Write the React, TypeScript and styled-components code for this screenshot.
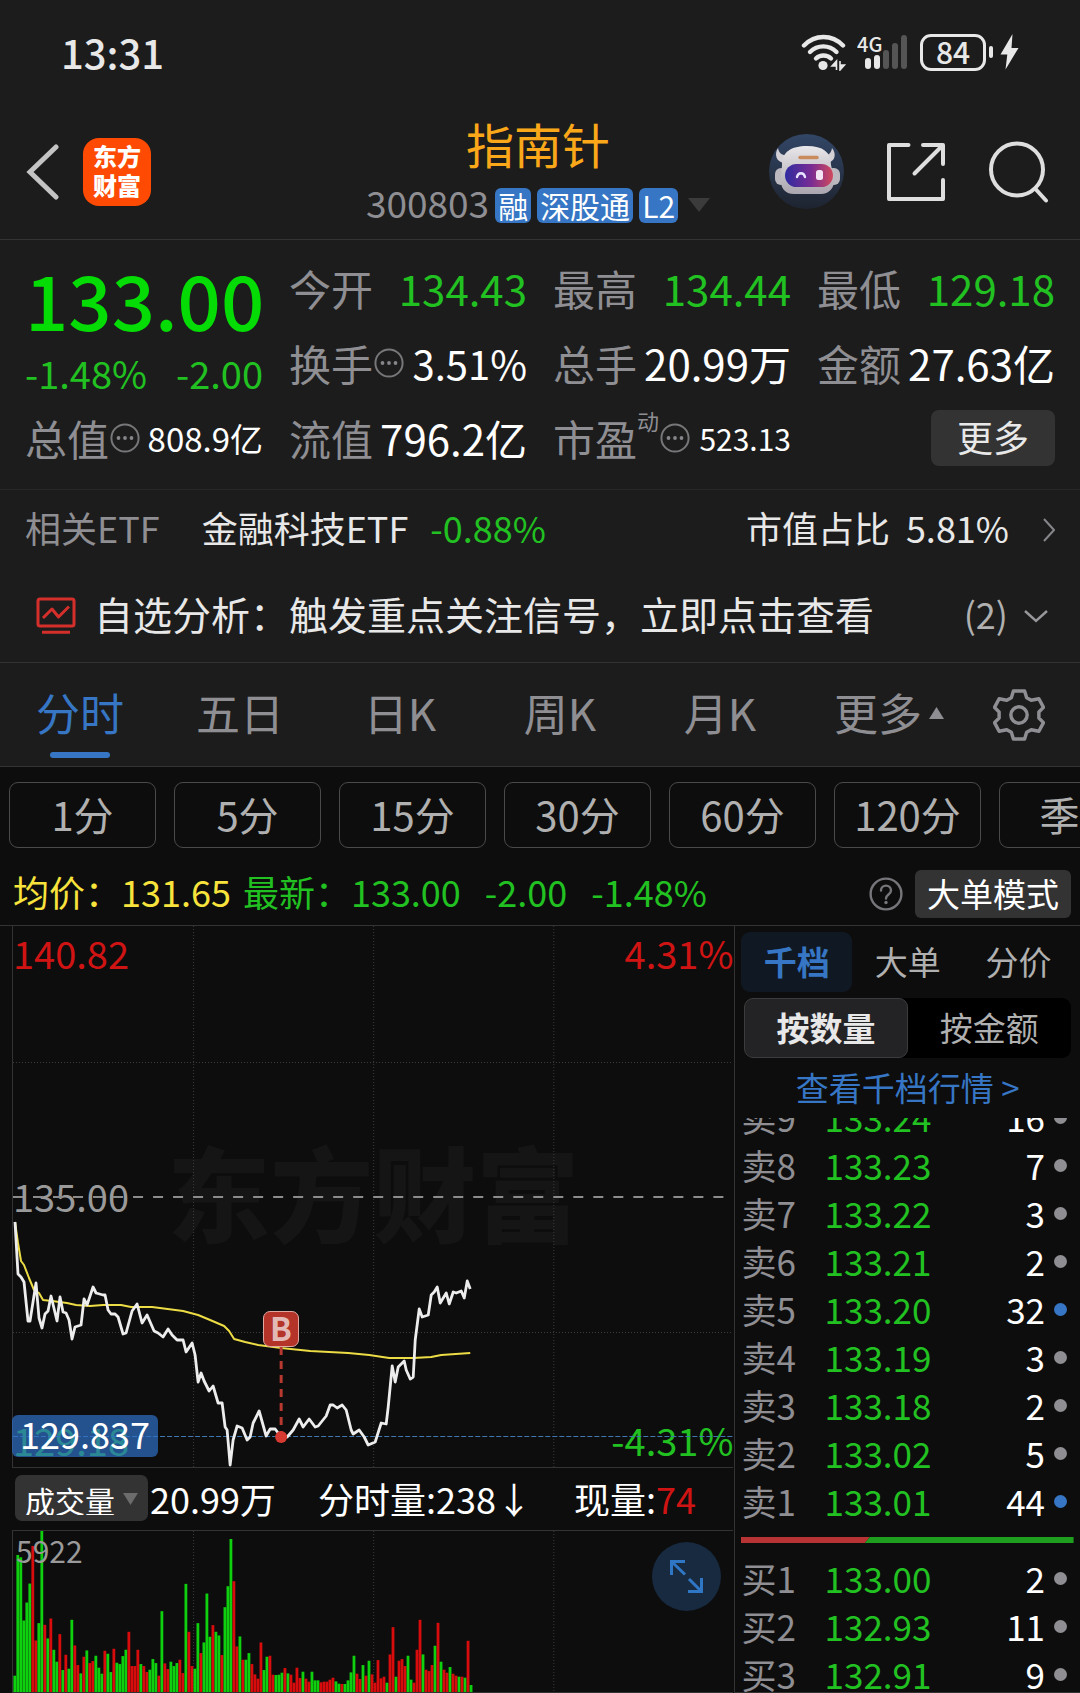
import React from "react";
import styled, { createGlobalStyle } from "styled-components";

const c = {
  panel: "#1c1c1c",
  page: "#0d0d0d",
  line: "#333333",
  label: "#8e8e93",
  soft: "#b0b0b0",
  text: "#e8e8e8",
  white: "#ffffff",
  green: "#22c122",
  brightGreen: "#05dc05",
  red: "#d01414",
  yellow: "#f8e33c",
  blue: "#3676c4",
};

const GlobalStyle = createGlobalStyle`
  * { box-sizing: border-box; }
  body {
    margin: 0;
    background: ${c.page};
    color: ${c.text};
    font-family: "Noto Sans CJK SC", "Noto Sans", sans-serif;
  }
  button, select {
    margin: 0;
    padding: 0;
    border: 0;
    background: none;
    color: inherit;
    font: inherit;
    cursor: pointer;
  }
  a { color: inherit; text-decoration: none; }
  svg { display: block; flex: none; }
`;

const Page = styled.main`
  width: 100%;
  overflow: hidden;
`;

/* ---------- top ---------- */

const Top = styled.header`
  background: ${c.panel};
  border-bottom: 1px solid ${c.line};
`;

const StatusBar = styled.div`
  display: flex;
  align-items: center;
  justify-content: space-between;
  height: 104px;
  padding: 0 61px;
`;

const Clock = styled.time`
  font-size: 40px;
  line-height: 60px;
  font-weight: 500;
`;

const StatusIcons = styled.div`
  display: flex;
  align-items: center;
  gap: 11px;
`;

const BatteryWrap = styled.div`
  display: flex;
  align-items: center;
  gap: 3px;
  margin-right: -4px;
`;

const Battery = styled.span`
  width: 66px;
  height: 37px;
  border: 3px solid ${c.text};
  border-radius: 11px;
  font-size: 30px;
  line-height: 28px;
  font-weight: 500;
  text-align: center;
`;

const BatteryNub = styled.span`
  width: 4px;
  height: 12px;
  border-radius: 2px;
  background: ${c.text};
`;

const TitleBar = styled.div`
  display: grid;
  grid-template-columns: 1fr auto 1fr;
  align-items: center;
  height: 135px;
  padding: 0 30px 0 26px;
`;

const TitleSide = styled.div<{ $end?: boolean }>`
  display: flex;
  align-items: center;
  gap: ${(p) => (p.$end ? "42px" : "24px")};
  justify-content: ${(p) => (p.$end ? "flex-end" : "flex-start")};
`;

const AppLogo = styled.a`
  display: grid;
  place-content: center;
  width: 68px;
  height: 68px;
  border-radius: 16px;
  background: #fe4a02;
  color: ${c.white};
  font-size: 24px;
  line-height: 29px;
  font-weight: 900;
  text-align: center;
  padding-bottom: 4px;
`;

const TitleBlock = styled.div`
  align-self: start;
  padding-top: 9px;
`;

const StockName = styled.h1`
  margin: 0 0 14px;
  color: #faa819;
  font-size: 48px;
  line-height: 60px;
  font-weight: 400;
  text-align: center;
`;

const CodeLine = styled.div`
  display: flex;
  align-items: baseline;
  gap: 6px;
  height: 36px;
`;

const Code = styled.span`
  color: ${c.label};
  font-size: 37px;
  line-height: 30px;
`;

const Badge = styled.span`
  padding: 0 3px;
  border-radius: 6px;
  background: ${c.blue};
  color: ${c.white};
  font-size: 30px;
  line-height: 35px;
`;

const CodeCaret = styled.svg`
  align-self: center;
  margin-left: 4px;
`;

/* ---------- quote ---------- */

const Quote = styled.section`
  display: grid;
  grid-template-columns: repeat(4, minmax(0, 1fr));
  grid-auto-rows: 75px;
  column-gap: 26px;
  padding: 10px 25px 14px;
  background: ${c.panel};
  border-bottom: 1px solid #282828;
`;

const LastPrice = styled.div`
  grid-row: span 2;
  color: ${c.green};
  font-size: 38px;
  line-height: 54px;
`;

const BigPrice = styled.strong`
  display: block;
  color: ${c.brightGreen};
  font-size: 76px;
  line-height: 96px;
  font-weight: 500;
  text-align: center;
`;

const ChangeLine = styled.div`
  display: flex;
  justify-content: space-between;
`;

const Cell = styled.div`
  display: flex;
  align-items: center;
  justify-content: space-between;
  font-size: 42px;
  line-height: 60px;
  white-space: nowrap;
`;

const CellLabel = styled.span`
  display: flex;
  align-items: center;
  color: ${c.label};
`;

const Sup = styled.sup`
  align-self: flex-start;
  font-size: 22px;
  line-height: 24px;
`;

const CellValue = styled.span<{ $size: number; $color: string }>`
  color: ${(p) => p.$color};
  font-size: ${(p) => p.$size}px;
`;

const MoreButton = styled.button`
  width: 124px;
  height: 56px;
  margin-left: auto;
  padding-bottom: 4px;
  border-radius: 8px;
  background: #333333;
  color: ${c.text};
  font-size: 36px;
  line-height: 50px;
`;

/* ---------- related ---------- */

const Related = styled.section`
  background: ${c.panel};
  border-bottom: 1px solid ${c.line};

  svg { margin-top: 6px; }
`;

const EtfRow = styled.a`
  display: flex;
  align-items: center;
  height: 73px;
  padding: 0 25px;
  font-size: 36px;
  line-height: 60px;
`;

const Muted = styled.span`
  color: ${c.label};
`;

const EtfName = styled.span`
  margin: 0 22px 0 42px;
`;

const Green = styled.span`
  color: ${c.green};
`;

const EtfShare = styled.span`
  display: flex;
  gap: 16px;
  margin-left: auto;
  margin-right: 34px;
`;

const SignalRow = styled.button`
  display: flex;
  align-items: center;
  width: 100%;
  height: 99px;
  padding: 0 32px 0 36px;
  text-align: left;
`;

const SignalText = styled.span`
  flex: 1;
  margin-left: 18px;
  font-size: 39px;
  line-height: 60px;
`;

const SignalCount = styled.span`
  margin-right: 16px;
  color: ${c.soft};
  font-size: 36px;
`;

/* ---------- period tabs ---------- */

const Tabs = styled.nav`
  display: grid;
  grid-template-columns: repeat(5, 80fr) 89fr 41fr;
  height: 104px;
  padding-right: 20px;
  background: ${c.panel};
  border-bottom: 1px solid ${c.line};
`;

const Tab = styled.button<{ $active?: boolean }>`
  display: flex;
  flex-direction: column;
  align-items: center;
  gap: 10px;
  padding-top: 20px;
  color: ${(p) => (p.$active ? c.blue : c.label)};
  font-size: 44px;
  line-height: 59px;

  &::after {
    content: "";
    width: 60px;
    height: 6px;
    border-radius: 3px;
    background: ${(p) => (p.$active ? c.blue : "transparent")};
  }
`;

const TabText = styled.span`
  display: flex;
  align-items: center;
  gap: 7px;
`;

const GearButton = styled.button`
  display: grid;
  place-content: center;
`;

const Chips = styled.div`
  display: flex;
  gap: 18px;
  padding: 15px 9px 9px;
  overflow: hidden;
`;

const Chip = styled.button`
  flex: none;
  width: 147px;
  height: 66px;
  padding-bottom: 2px;
  border: 1px solid #4a4a4a;
  border-radius: 9px;
  color: ${c.soft};
  font-size: 40px;
  line-height: 60px;
`;

const Info = styled.div`
  display: flex;
  align-items: center;
  height: 69px;
  padding: 0 9px 0 13px;
  border-bottom: 1px solid ${c.line};
  color: ${c.green};
  font-size: 36px;
  line-height: 60px;
  white-space: nowrap;

  button { margin-top: 6px; }
`;

const Average = styled.span`
  margin-right: 12px;
  color: ${c.yellow};
`;

const InfoDelta = styled.span`
  margin-left: 24px;
`;

const HelpButton = styled.button`
  margin: 0 12px 0 auto;
`;

const ModeButton = styled.button`
  height: 48px;
  padding: 0 12px 2px;
  border-radius: 6px;
  background: #333333;
  color: ${c.white};
  font-size: 33px;
  line-height: 44px;
`;

/* ---------- charts ---------- */

const Board = styled.div`
  display: grid;
  grid-template-columns: minmax(0, 17fr) minmax(0, 8fr);
`;

const Charts = styled.section`
  padding: 0 1px 0 12px;
`;

const PriceChart = styled.div`
  position: relative;
  height: 542px;
  border-left: 1px solid ${c.line};
  border-bottom: 1px solid ${c.line};
`;

const Plot = styled.svg`
  position: absolute;
  inset: 0;
  width: 100%;
  height: 100%;
`;

const Watermark = styled.div`
  position: absolute;
  inset: 209px 0 auto 0;
  color: #151515;
  font-size: 103px;
  line-height: 112px;
  font-weight: 900;
  text-align: center;
`;

const AxisLabel = styled.span<{ $top: number; $right?: boolean; $color: string }>`
  position: absolute;
  top: ${(p) => p.$top}px;
  ${(p) => (p.$right ? "right: 0;" : "left: 0;")}
  color: ${(p) => p.$color};
  font-size: 38px;
  line-height: 50px;
`;

const CursorTag = styled.span`
  position: absolute;
  left: -1px;
  top: 489px;
  padding: 0 8px 6px;
  border-radius: 6px;
  background: rgba(47, 113, 198, 0.7);
  color: ${c.white};
  font-size: 36px;
  line-height: 36px;
`;

const BuyMark = styled.span`
  position: absolute;
  left: 37.2%;
  top: 385px;
  width: 36px;
  height: 36px;
  margin-left: -18px;
  border: 1px solid #e0a8a2;
  border-radius: 7px;
  background: #b5342a;
  color: #e3b9b5;
  font-size: 32px;
  line-height: 30px;
  font-weight: 700;
  text-align: center;
`;

const VolumeBar = styled.div`
  display: flex;
  align-items: center;
  height: 62px;
  padding: 0 0 2px 3px;
  color: ${c.white};
  font-size: 36px;
  line-height: 50px;
  white-space: nowrap;
`;

const Picker = styled.label`
  position: relative;
  margin-right: 2px;

  svg {
    position: absolute;
    right: 10px;
    top: 18px;
    pointer-events: none;
  }
`;

const PickerSelect = styled.select`
  display: block;
  width: 133px;
  height: 46px;
  padding: 0 0 6px 10px;
  border-radius: 7px;
  background: #333333;
  appearance: none;
  font-size: 30px;
`;

const MinuteVolume = styled.span`
  margin: 0 42px;
`;

const Red = styled.span`
  color: ${c.red};
`;

const VolumeChart = styled.div`
  position: relative;
  height: 163px;
  border: 1px solid ${c.line};
  border-right: 0;
`;

const VolumeMax = styled.span`
  position: absolute;
  left: 3px;
  top: 2px;
  color: #9a9a9a;
  font-size: 30px;
  line-height: 34px;
`;

const ExpandButton = styled.button`
  position: absolute;
  right: 12px;
  top: 11px;
  display: grid;
  place-content: center;
  width: 69px;
  height: 69px;
  border-radius: 50%;
  background: #172a40;
`;

/* ---------- order book ---------- */

const Side = styled.aside`
  padding: 6px 6px 0;
  border-left: 1px solid ${c.line};
  border-bottom: 1px solid ${c.line};
`;

const SideTabs = styled.div`
  display: grid;
  grid-template-columns: repeat(3, 1fr);
  margin-bottom: 6px;
`;

const SideTab = styled.button<{ $active?: boolean }>`
  height: 60px;
  padding-bottom: 2px;
  border-radius: 9px;
  background: ${(p) => (p.$active ? "#101923" : "transparent")};
  color: ${(p) => (p.$active ? c.blue : c.soft)};
  font-size: 33px;
  font-weight: ${(p) => (p.$active ? 700 : 400)};
`;

const Segment = styled.div`
  display: grid;
  grid-template-columns: 1fr 1fr;
  margin: 0 3px;
  border-radius: 9px;
  background: #000000;
`;

const SegmentButton = styled.button<{ $active?: boolean }>`
  height: 60px;
  padding-bottom: 2px;
  border: 1px solid ${(p) => (p.$active ? "#3c3c3e" : "transparent")};
  border-radius: 9px;
  background: ${(p) => (p.$active ? "#232326" : "transparent")};
  color: ${(p) => (p.$active ? c.text : c.soft)};
  font-size: 33px;
  font-weight: ${(p) => (p.$active ? 700 : 400)};
`;

const DepthLink = styled.a`
  display: block;
  padding-bottom: 2px;
  color: ${c.blue};
  font-size: 33px;
  line-height: 58px;
  text-align: center;
`;

const BookView = styled.div<{ $height: number; $end?: boolean }>`
  display: flex;
  flex-direction: column;
  justify-content: ${(p) => (p.$end ? "flex-end" : "flex-start")};
  height: ${(p) => p.$height}px;
  overflow: hidden;
`;

const BookTable = styled.table`
  flex: none;
  width: 100%;
  border-collapse: collapse;
  font-size: 35px;
  line-height: 48px;
`;

const BookLevel = styled.th`
  width: 25%;
  padding: 0;
  color: ${c.label};
  font-weight: 400;
  text-align: left;
`;

const BookPrice = styled.td`
  padding: 0;
  color: ${c.green};
`;

const BookQty = styled.td`
  padding: 0;
  color: ${c.white};
  text-align: right;
`;

const BookMark = styled.td`
  width: 29px;
  padding: 0 7px 0 9px;
`;

const Dot = styled.span<{ $big: boolean }>`
  display: block;
  width: 13px;
  height: 13px;
  border-radius: 50%;
  background: ${(p) => (p.$big ? c.blue : c.label)};
`;

const Ratio = styled.svg`
  width: 100%;
  height: 6px;
  margin: 12px 0 11px;
`;

/* ---------- data ---------- */

type Level = [string, string, number];

const sells: Level[] = [
  ["卖9", "133.24", 16],
  ["卖8", "133.23", 7],
  ["卖7", "133.22", 3],
  ["卖6", "133.21", 2],
  ["卖5", "133.20", 32],
  ["卖4", "133.19", 3],
  ["卖3", "133.18", 2],
  ["卖2", "133.02", 5],
  ["卖1", "133.01", 44],
];

const buys: Level[] = [
  ["买1", "133.00", 2],
  ["买2", "132.93", 11],
  ["买3", "132.91", 9],
];

const priceLine =
  "2,296 5,348 8,351 11,356 15,395 17,395 23,357 26,392 29,402 32,388 35,385 38,370 44,395 47,371 50,386 53,387 56,394 59,413 62,401 68,399 71,373 74,379 80,361 83,367 90,369 92,369 95,384 98,388 102,388 105,391 110,408 113,407 119,385 124,378 129,397 134,389 141,405 145,407 150,411 155,403 159,409 164,414 170,414 173,426 179,417 182,429 185,456 188,447 191,455 196,465 200,460 205,477 209,477 212,501 214,504 217,539 220,514 224,500 229,502 234,514 237,511 240,497 246,485 253,510 257,503 262,503 268,511 274,511 280,504 286,493 290,501 296,493 302,501 305,500 313,490 317,479 320,479 324,482 329,479 333,484 338,504 340,508 346,504 351,511 355,519 362,516 368,497 373,498 375,481 379,440 382,456 385,441 391,435 393,444 397,453 400,451 402,414 406,383 409,391 415,389 418,369 421,366 424,361 427,377 433,367 436,378 440,366 443,367 448,365 451,372 454,355 457,363";

const averageLine =
  "2,296 5,317 8,335 11,339 16,352 21,364 26,367 30,374 39,375 54,377 63,379 77,380 90,379 108,379 118,381 139,381 170,385 185,389 197,394 211,400 216,405 221,413 232,416 245,419 268,422 297,425 335,427 356,429 376,432 400,432 418,431 428,429 457,427";

// One value a minute; a negative value is a minute drawn in red.
const volumes = [
  49, 412, 405, 215, 269, 326, -439, -155, 207, 484, -202, 161, -221, 127, 91, -174, 66, -112, 70, 217,
  -140, -81, 56, -106, 125, -87, -93, 109, 73, 55, -124, 115, 60, -130, 88, 84, 108, 127, -181, -78,
  -78, -127, 84, -78, -60, 67, 99, 87, -49, 243, -86, -69, 91, 78, 87, -97, -57, 325, -181, -78,
  70, 207, -117, 149, 296, 166, -201, 181, 170, -111, 255, 318, 460, -333, -137, 167, -97, 97, 117, -84,
  -53, -40, -149, 66, 106, -109, -52, 51, 52, 58, -72, 56, -52, -28, -73, -42, 61, -40, -31, 61,
  35, 35, -29, -31, -31, -37, -43, 32, 25, -24, 24, 35, 59, 109, -55, -39, 81, -49, 94, -53,
  -28, -96, -41, -46, 28, -113, -195, 46, -94, -99, -78, 109, 37, -28, -127, -217, 113, -67, -63, -81,
  139, -208, 91, -67, -58, 75, -55, -49, 46, -46, 43, -154, 21,
];

/* ---------- icons ---------- */

const MoreDots = () => (
  <svg width="32" height="32" viewBox="0 0 32 32" fill="none">
    <circle cx="16" cy="16" r="13.6" stroke="#77777a" strokeWidth="2" />
    <circle cx="9.5" cy="16" r="1.9" fill="#85858a" />
    <circle cx="16" cy="16" r="1.9" fill="#85858a" />
    <circle cx="22.5" cy="16" r="1.9" fill="#85858a" />
  </svg>
);

const Wifi = () => (
  <svg width="45" height="37" viewBox="0 0 45 37" fill="none" stroke={c.text} strokeWidth="4.4" strokeLinecap="round">
    <path d="M3 11.5C14 .2 31 .2 42 11.5" />
    <path d="M9 18C16.5 10.5 28 10.5 35.5 18" />
    <path d="M15 24.5C19 20.5 26 20.5 30 24.5" />
    <circle cx="22" cy="31.500" r="4.600" fill={c.text} stroke="none" />
    <path d="M35.500 27v9M35.500 27l-4.500 5h4.500zM39 36v-9M39 36l4.500-5H39z" fill={c.text} strokeWidth="1.600" strokeLinecap="butt" />
  </svg>
);

const Signal = () => (
  <svg width="52" height="37" viewBox="0 0 52 37">
    <text x="0" y="18" fill={c.text} fontSize="20" fontWeight="500">4G</text>
    <rect x="8" y="24" width="6" height="11" rx="3" fill={c.text} />
    <rect x="17" y="21" width="6" height="14" rx="3" fill={c.text} />
    <rect x="26" y="16" width="6" height="19" rx="3" fill="#555" />
    <rect x="35" y="9" width="6" height="26" rx="3" fill="#555" />
    <rect x="44" y="1" width="6" height="34" rx="3" fill="#555" />
  </svg>
);

const Bolt = () => (
  <svg width="19" height="36" viewBox="0 0 19 36" fill={c.text}>
    <path d="M12.5 0L.5 20.5h6.800L5.500 35.500 18.500 14h-7z" />
  </svg>
);

const Robot = () => (
  <svg width="75" height="75" viewBox="0 0 75 75">
    <defs>
      <linearGradient id="disc" x1="0" y1="0" x2="0" y2="1">
        <stop offset="0" stopColor="#324666" />
        <stop offset="1" stopColor="#1e2430" />
      </linearGradient>
      <linearGradient id="shell" x1="0" y1="0" x2="0" y2="1">
        <stop offset="0" stopColor="#e9e7ea" />
        <stop offset="1" stopColor="#aaa5ae" />
      </linearGradient>
      <linearGradient id="visor" x1="0" y1="0" x2="1" y2="0">
        <stop offset="0" stopColor="#2f2ba0" />
        <stop offset="0.55" stopColor="#7a2c94" />
        <stop offset="1" stopColor="#d04a5c" />
      </linearGradient>
    </defs>
    <circle cx="37.5" cy="37.5" r="37.5" fill="url(#disc)" />
    <path d="M9 14c-4 6-2 14 6 15l5-8c-6 1-10-1-11-7zM63 14c5 6 3 14-5 15l-5-8c6 1 9-1 10-7z" fill="#d3d0d6" />
    <rect x="6" y="34" width="12" height="17" rx="6" fill="#bcb8c0" />
    <rect x="58" y="34" width="13" height="17" rx="6" fill="#bcb8c0" />
    <path d="M13 31C13 18 22 12 38 12s24 6 24 19l3 13c1 10-5 16-13 16H25c-9 0-14-6-13-16z" fill="url(#shell)" />
    <path d="M31 23.500h17" stroke="#c98a5c" strokeWidth="3.500" strokeLinecap="round" fill="none" />
    <rect x="16" y="30" width="48" height="23" rx="11.500" fill="url(#visor)" />
    <path d="M28 43c1-5 7-5 8 0" stroke="#e7e4ff" strokeWidth="2.400" strokeLinecap="round" fill="none" />
    <rect x="47" y="36" width="7" height="10" rx="2.500" fill="#f2e4f2" />
  </svg>
);

const Share = () => (
  <svg width="60" height="60" viewBox="0 0 60 60" fill="none" stroke="#dedede" strokeWidth="4" strokeLinecap="round" strokeLinejoin="round">
    <path d="M22.5 3H3v54h54V38M37 3h20v19M56 4L28.500 31.500" />
  </svg>
);

const Search = () => (
  <svg width="62" height="62" viewBox="0 0 62 62" fill="none" stroke="#dedede" strokeWidth="4" strokeLinecap="round">
    <circle cx="29" cy="28.5" r="26" />
    <path d="M48 48.5L58 59.5" />
  </svg>
);

const Gear = () => (
  <svg width="52" height="52" viewBox="0 0 51 51" fill="none" stroke={c.label} strokeWidth="3.4" strokeLinejoin="round">
    <path d="M20 2h11l2 6.5 4.5 2.5 7.5-1.5 4.5 8.5L45 22.500v6l4.500 4.500-4.500 8.500-7.500-1.500-4.500 2.500-2 6.500H20l-2-6.500-4.500-2.500L6 41.500 1.500 33 6 28.500v-6L1.500 18 6 9.500l7.500 1.500L18 8.500z" />
    <circle cx="25.5" cy="25.5" r="8" />
  </svg>
);

const Help = () => (
  <svg width="34" height="34" viewBox="0 0 34 34" fill="none" stroke="#76767a" strokeWidth="2.4">
    <circle cx="17" cy="17" r="15.4" />
    <path d="M12 13.5c0-6.500 10-6.500 10 0 0 4-5 4-5 8" strokeLinecap="round" />
    <circle cx="17" cy="25.5" r="1.7" fill="#76767a" stroke="none" />
  </svg>
);

const Monitor = () => (
  <svg width="40" height="37" viewBox="0 0 40 37" fill="none" stroke="#d42f2b" strokeWidth="3">
    <rect x="2" y="2" width="36" height="27" rx="2" />
    <path d="M7 21l9-9 6.500 8L33 9.500M6 35.200h28" strokeLinejoin="round" />
  </svg>
);

/* ---------- sections ---------- */

const CellItem = ({ label, value, sup, dots, size = 42, color = c.white }: {
  label: string; value: string; sup?: string; dots?: boolean; size?: number; color?: string;
}) => (
  <Cell>
    <CellLabel>
      {label}
      {sup && <Sup>{sup}</Sup>}
      {dots && <MoreDots />}
    </CellLabel>
    <CellValue $size={size} $color={color}>{value}</CellValue>
  </Cell>
);

const Book = ({ rows, label }: { rows: Level[]; label: string }) => (
  <BookTable aria-label={label}>
    <tbody>
      {rows.map(([name, price, qty]) => (
        <tr key={name}>
          <BookLevel scope="row">{name}</BookLevel>
          <BookPrice>{price}</BookPrice>
          <BookQty>{qty}</BookQty>
          <BookMark><Dot $big={qty > 30} /></BookMark>
        </tr>
      ))}
    </tbody>
  </BookTable>
);

const Grid = ({ height, rows = [] }: { height: number; rows?: number[] }) => (
  <g stroke="#3c3c3c" strokeWidth="1" strokeDasharray="1 2">
    {[180, 360, 540].map((x) => (
      <line key={x} x1={x + 0.5} x2={x + 0.5} y1="0" y2={height} vectorEffect="non-scaling-stroke" />
    ))}
    {rows.map((y) => (
      <line key={y} x1="0" x2="720" y1={y + 0.5} y2={y + 0.5} vectorEffect="non-scaling-stroke" />
    ))}
  </g>
);

export default function App() {
  return (
    <Page>
      <GlobalStyle />
      <Top>
        <StatusBar>
          <Clock>13:31</Clock>
          <StatusIcons>
            <Wifi />
            <Signal />
            <BatteryWrap>
              <Battery>84</Battery>
              <BatteryNub />
            </BatteryWrap>
            <Bolt />
          </StatusIcons>
        </StatusBar>
        <TitleBar>
          <TitleSide>
            <button aria-label="返回">
              <svg width="33" height="58" viewBox="0 0 33 58" fill="none" stroke="#c4c4c4" strokeWidth="5" strokeLinecap="round">
                <path d="M30 4L4 29l26 25" />
              </svg>
            </button>
            <AppLogo href="#home">东方<br />财富</AppLogo>
          </TitleSide>
          <TitleBlock>
            <StockName>指南针</StockName>
            <CodeLine>
              <Code>300803</Code>
              <Badge>融</Badge>
              <Badge>深股通</Badge>
              <Badge>L2</Badge>
              <CodeCaret width="22" height="14" viewBox="0 0 22 14" fill="#3b3b3b">
                <path d="M0 0h22L11 14z" />
              </CodeCaret>
            </CodeLine>
          </TitleBlock>
          <TitleSide $end>
            <button aria-label="助手"><Robot /></button>
            <button aria-label="分享"><Share /></button>
            <button aria-label="搜索"><Search /></button>
          </TitleSide>
        </TitleBar>
      </Top>

      <Quote>
        <LastPrice>
          <BigPrice>133.00</BigPrice>
          <ChangeLine><span>-1.48%</span><span>-2.00</span></ChangeLine>
        </LastPrice>
        <CellItem label="今开" value="134.43" color={c.green} />
        <CellItem label="最高" value="134.44" color={c.green} />
        <CellItem label="最低" value="129.18" color={c.green} />
        <CellItem label="换手" value="3.51%" dots size={40} />
        <CellItem label="总手" value="20.99万" />
        <CellItem label="金额" value="27.63亿" />
        <CellItem label="总值" value="808.9亿" dots size={33} />
        <CellItem label="流值" value="796.2亿" />
        <CellItem label="市盈" value="523.13" sup="动" dots size={30} />
        <Cell><MoreButton>更多</MoreButton></Cell>
      </Quote>

      <Related>
        <EtfRow href="#etf">
          <Muted>相关ETF</Muted>
          <EtfName>金融科技ETF</EtfName>
          <Green>-0.88%</Green>
          <EtfShare><span>市值占比</span><span>5.81%</span></EtfShare>
          <svg width="12" height="24" viewBox="0 0 12 24" fill="none" stroke="#85858a" strokeWidth="2">
            <path d="M1 1l10 11L1 23" />
          </svg>
        </EtfRow>
        <SignalRow>
          <Monitor />
          <SignalText>自选分析：触发重点关注信号，立即点击查看</SignalText>
          <SignalCount>(2)</SignalCount>
          <svg width="24" height="14" viewBox="0 0 24 14" fill="none" stroke="#98989c" strokeWidth="2.4">
            <path d="M1 2l11 10L23 2" />
          </svg>
        </SignalRow>
      </Related>

      <Tabs>
        <Tab $active>分时</Tab>
        <Tab>五日</Tab>
        <Tab>日K</Tab>
        <Tab>周K</Tab>
        <Tab>月K</Tab>
        <Tab>
          <TabText>
            更多
            <svg width="15" height="12" viewBox="0 0 15 12" fill={c.label}><path d="M7.5 0L15 12H0z" /></svg>
          </TabText>
        </Tab>
        <GearButton aria-label="设置"><Gear /></GearButton>
      </Tabs>

      <Chips>
        {["1分", "5分", "15分", "30分", "60分", "120分", "季K"].map((t) => (
          <Chip key={t}>{t}</Chip>
        ))}
      </Chips>

      <Info>
        <Average>均价：131.65</Average>
        <span>最新：133.00</span>
        <InfoDelta>-2.00</InfoDelta>
        <InfoDelta>-1.48%</InfoDelta>
        <HelpButton aria-label="帮助"><Help /></HelpButton>
        <ModeButton>大单模式</ModeButton>
      </Info>

      <Board>
        <Charts>
          <PriceChart>
            <Watermark>东方财富</Watermark>
            <AxisLabel $top={2} $color={c.red}>140.82</AxisLabel>
            <AxisLabel $top={2} $right $color={c.red}>4.31%</AxisLabel>
            <AxisLabel $top={245} $color="#9a9a9a">135.00</AxisLabel>
            <AxisLabel $top={489} $color={c.green}>129.18</AxisLabel>
            <AxisLabel $top={489} $right $color={c.green}>-4.31%</AxisLabel>
            <Plot viewBox="0 0 720 541" preserveAspectRatio="none" fill="none">
              <Grid height={541} rows={[136, 406]} />
              <line x1="0" x2="720" y1="271" y2="271" stroke="#8c8c8c" strokeWidth="2" strokeDasharray="10 10" />
              <line x1="0" x2="720" y1="510.5" y2="510.5" stroke="#3f77b0" strokeWidth="1" strokeDasharray="5 2" />
              <polyline points={averageLine} stroke="#ecdc45" strokeWidth="2" strokeLinejoin="round" />
              <polyline points={priceLine} stroke="#ededed" strokeWidth="2.8" strokeLinejoin="round" />
              <line x1="268" x2="268" y1="421" y2="506" stroke="#b8392f" strokeWidth="3" strokeDasharray="8 6" />
              <circle cx="268" cy="511" r="6" fill="#d63a30" />
            </Plot>
            <BuyMark>B</BuyMark>
            <CursorTag>129.837</CursorTag>
          </PriceChart>
          <VolumeBar>
            <Picker>
              <PickerSelect aria-label="指标">
                <option>成交量</option>
              </PickerSelect>
              <svg width="15" height="12" viewBox="0 0 15 12" fill="#6c6c6c"><path d="M0 0h15L7.5 12z" /></svg>
            </Picker>
            <span>20.99万</span>
            <MinuteVolume>分时量:238↓</MinuteVolume>
            <span>现量:<Red>74</Red></span>
          </VolumeBar>
          <VolumeChart>
            <Plot viewBox="0 0 720 484" preserveAspectRatio="none">
              <Grid height={484} />
              {volumes.map((v, i) => (
                <rect key={i} x={i * 3 + 0.4} y={484 - Math.abs(v)} width="2.8" height={Math.abs(v)} fill={v > 0 ? "#0fd00f" : "#d80c0c"} />
              ))}
            </Plot>
            <VolumeMax>5922</VolumeMax>
            <ExpandButton aria-label="放大">
              <svg width="35" height="35" viewBox="0 0 35 35" fill="none" stroke="#2f76c4" strokeWidth="3">
                <path d="M16 2.5H2.5V16M3 3l13 12.500M32.500 19v13.500H19M32 32L20 20" />
              </svg>
            </ExpandButton>
          </VolumeChart>
        </Charts>

        <Side>
          <SideTabs>
            <SideTab $active>千档</SideTab>
            <SideTab>大单</SideTab>
            <SideTab>分价</SideTab>
          </SideTabs>
          <Segment>
            <SegmentButton $active>按数量</SegmentButton>
            <SegmentButton>按金额</SegmentButton>
          </Segment>
          <DepthLink href="#depth">查看千档行情 &gt;</DepthLink>
          <BookView $height={407} $end>
            <Book rows={sells} label="卖盘" />
          </BookView>
          <Ratio viewBox="0 0 333 6" preserveAspectRatio="none">
            <path d="M0 0h129l-5 6H0z" fill="#b83434" />
            <path d="M129 0h204v6H124z" fill="#1f9d1f" />
          </Ratio>
          <BookView $height={138}>
            <Book rows={buys} label="买盘" />
          </BookView>
        </Side>
      </Board>
    </Page>
  );
}
